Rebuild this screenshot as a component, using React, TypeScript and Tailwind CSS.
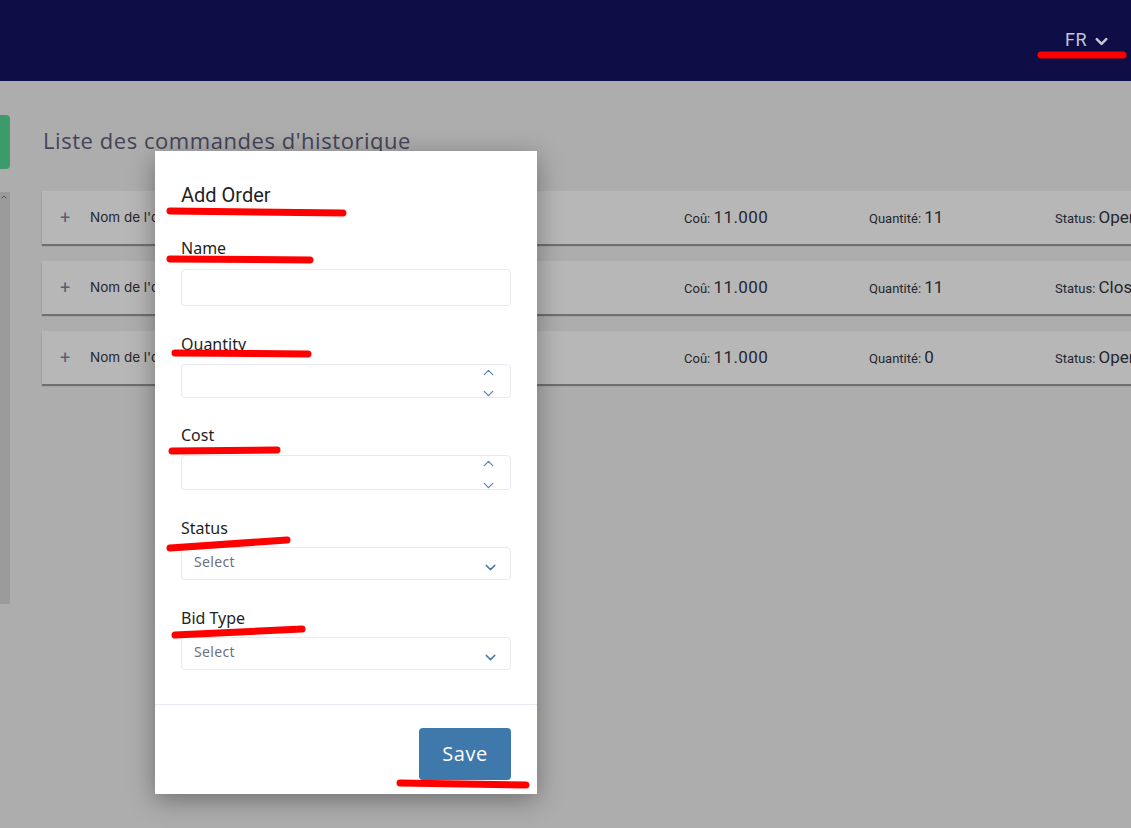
import { ChevronDown, ChevronUp } from 'lucide-react'

const orders = [
    { cost: '11.000', qty: '11', status: 'Open' },
    { cost: '11.000', qty: '11', status: 'Closed' },
    { cost: '11.000', qty: '0', status: 'Open' },
]

function NumberField({ tall }: { tall?: boolean }) {
    return (
        <div className={`${tall ? 'h-[35px]' : 'h-[34px]'} rounded border border-[#e6e8f2] flex justify-end pr-[13px]`}>
            <div className="flex flex-col justify-between items-center -mt-[1px] -mb-[5px]">
                <ChevronUp size={17} strokeWidth={1.8} className="text-[#5a86b6]" />
                <ChevronDown size={17} strokeWidth={1.8} className="text-[#5a86b6]" />
            </div>
        </div>
    )
}

function SelectField() {
    return (
        <div className="h-[33px] rounded border border-[#e6e8f2] flex justify-between pl-[12px] pr-[11px]">
            <span className="text-[14px] leading-[28px] text-[#6e7080] tracking-wide">Select</span>
            <ChevronDown size={17} strokeWidth={2} className="text-[#4d79aa] mt-[11px]" />
        </div>
    )
}

export default function App() {
    return (
        <div className="relative w-[1131px] h-[828px] overflow-hidden bg-[#adadad] font-['Roboto',sans-serif]">
            {/* Header */}
            <header className="h-[81px] bg-[#0e0d45] flex justify-end items-start pr-[20px] pt-[26px]">
                <div className="flex items-center gap-[5px] text-[#c4c6d6]">
                    <span className="text-[18px] tracking-wide">FR</span>
                    <ChevronDown size={19} strokeWidth={3.2} className="mt-[3px]" />
                </div>
            </header>

            <div className="flex">
                {/* Side strip */}
                <div className="w-[10px] shrink-0 flex flex-col">
                    <div className="mt-[34px] h-[54px] rounded-r bg-[#3d9a6b]" />
                    <div className="mt-[23px] h-[412px] bg-[#9b9b9b] relative">
                        <ChevronUp size={8} strokeWidth={3} className="absolute left-0 top-[1px] text-[#555]" />
                    </div>
                </div>

                {/* Content */}
                <main className="pl-[33px] pt-[44px] flex-1">
                    <h1 className="text-[22px] leading-[30px] text-[#444458] font-['Open_Sans',sans-serif] tracking-[0.55px]">
                        Liste des commandes d'historique
                    </h1>
                    <div className="mt-[36px] -ml-[1px] flex flex-col gap-[17px] w-[1120px]">
                        {orders.map((o, i) => (
                            <div
                                key={i}
                                className="h-[53px] bg-[#b7b7b7] flex items-center pl-[18px] shadow-[0_2px_1px_rgba(0,0,0,0.35)]"
                            >
                                <span className="w-[30px] text-[18px] text-[#5a5e72]">+</span>
                                <span className="w-[594px] text-[13.5px] text-[#26262e] font-['Inter',sans-serif]">
                                    Nom de l'ordre: Commande {i + 1}
                                </span>
                                <span className="w-[185px] text-[#26262e]">
                                    <span className="text-[13px]">Coû: </span>
                                    <span className="text-[17px] tracking-wide">{o.cost}</span>
                                </span>
                                <span className="w-[186px] text-[#26262e]">
                                    <span className="text-[13px]">Quantité: </span>
                                    <span className="text-[17px]">{o.qty}</span>
                                </span>
                                <span className="text-[#26262e] whitespace-nowrap">
                                    <span className="text-[13px]">Status: </span>
                                    <span className="text-[17px]">{o.status}</span>
                                </span>
                            </div>
                        ))}
                    </div>
                </main>
            </div>

            {/* Modal */}
            <div className="absolute left-[155px] top-[151px] w-[382px] h-[643px] bg-white shadow-[0_6px_24px_rgba(0,0,0,0.35)] flex flex-col font-['Noto_Sans',sans-serif] text-[#1f1f24]">
                <div className="px-[26px] pt-[32px] flex-1">
                    <h2 className="text-[20px] leading-[24px] font-['Roboto',sans-serif]">Add Order</h2>

                    <label className="block mt-[29px] text-[16px] leading-[24px]">Name</label>
                    <div className="mt-[9px] h-[37px] w-[330px] rounded border border-[#e6e8f2]" />

                    <label className="block mt-[26px] text-[16px] leading-[24px]">Quantity</label>
                    <div className="mt-[8px] w-[330px]"><NumberField /></div>

                    <label className="block mt-[25px] text-[16px] leading-[24px]">Cost</label>
                    <div className="mt-[8px] w-[330px]"><NumberField tall /></div>

                    <label className="block mt-[26px] text-[16px] leading-[24px]">Status</label>
                    <div className="mt-[7px] w-[330px]"><SelectField /></div>

                    <label className="block mt-[26px] text-[16px] leading-[24px]">Bid Type</label>
                    <div className="mt-[7px] w-[330px]"><SelectField /></div>
                </div>
                <div className="border-t border-[#e8ebf3] h-[90px] flex justify-end items-start pt-[23px] pr-[26px]">
                    <button className="w-[92px] h-[52px] rounded bg-[#3f78aa] text-white text-[20px] tracking-wide font-['Open_Sans',sans-serif]">
                        Save
                    </button>
                </div>
            </div>

            {/* Red annotation marks */}
            <svg className="absolute inset-0 pointer-events-none" width="1131" height="828">
                <g stroke="#ff0000" strokeWidth="7" strokeLinecap="round" fill="none">
                    <line x1="1041" y1="55" x2="1123" y2="55" />
                    <line x1="170" y1="211" x2="343" y2="213" />
                    <line x1="170" y1="259" x2="310" y2="260" />
                    <line x1="175" y1="353" x2="308" y2="354" />
                    <line x1="172" y1="451" x2="277" y2="450" />
                    <line x1="170" y1="548" x2="287" y2="540" />
                    <line x1="175" y1="635" x2="302" y2="629" />
                    <line x1="400" y1="783" x2="526" y2="785" />
                </g>
            </svg>
        </div>
    )
}
